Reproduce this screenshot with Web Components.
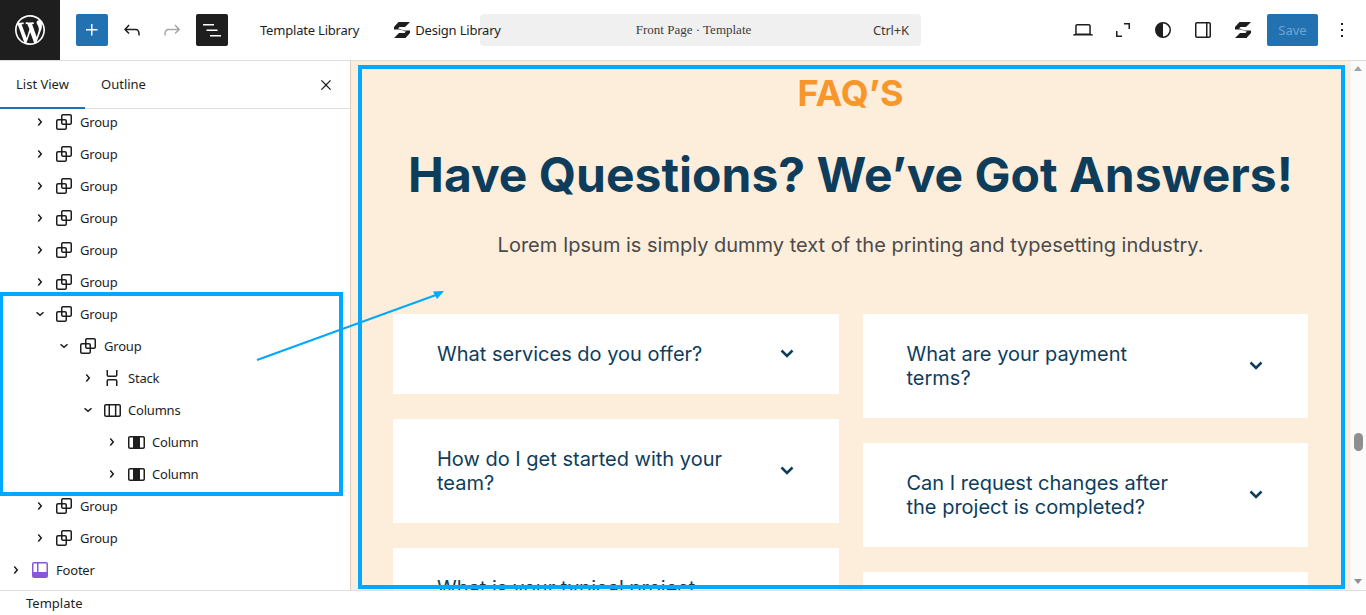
<!DOCTYPE html>
<html><head><meta charset="utf-8"><style>
html,body{margin:0;height:100%;overflow:hidden;background:#fff}
body{font-family:"Noto Sans",sans-serif;color:#1e1e1e}
</style></head><body>
<wp-editor></wp-editor>
<script>
const P={
wp:'M20 10c0-5.51-4.49-10-10-10C4.48 0 0 4.49 0 10c0 5.52 4.48 10 10 10 5.51 0 10-4.48 10-10zM7.78 15.37L4.37 6.22c.55-.02 1.17-.08 1.17-.08.5-.06.44-1.13-.06-1.11 0 0-1.45.11-2.37.11-.18 0-.37 0-.58-.01C4.12 2.69 6.87 1.11 10 1.11c2.33 0 4.45.87 6.05 2.34-.68-.11-1.65.39-1.65 1.58 0 .74.45 1.36.9 2.1.35.61.55 1.36.55 2.46 0 1.49-1.4 5-1.4 5l-3.03-8.37c.54-.02.82-.17.82-.17.5-.05.44-1.25-.06-1.22 0 0-1.44.12-2.38.12-.87 0-2.33-.12-2.33-.12-.5-.03-.56 1.2-.06 1.22l.92.08 1.26 3.41zM17.41 10c.24-.64.74-1.87.43-4.25.7 1.29 1.05 2.71 1.05 4.25 0 3.29-1.73 6.24-4.4 7.78.97-2.59 1.94-5.2 2.92-7.78zM6.1 18.09C3.12 16.65 1.11 13.53 1.11 10c0-1.3.23-2.48.72-3.59C3.25 10.3 4.67 14.2 6.1 18.09zm4.03-6.63l2.58 6.98c-.86.29-1.76.45-2.71.45-.79 0-1.57-.11-2.29-.33.81-2.38 1.62-4.74 2.42-7.1z',
plus:'M11 12.5V17.5H12.5V12.5H17.5V11H12.5V6H11V11H6V12.5H11Z',
undo:'M18.3 11.7c-.6-.6-1.4-.9-2.3-.9H6.7l2.9-3.3-1.1-1-4.5 5L8.5 16l1-1-2.7-2.7H16c.5 0 .9.2 1.3.5 1 1 1 3.4 1 4.5v.3h1.5v-.2c0-1.5 0-4.3-1.5-5.7z',
redo:'M15.6 6.5l-1.1 1 2.9 3.3H8c-.9 0-1.7.3-2.3.9-1.4 1.5-1.4 4.2-1.4 5.6v.2h1.5v-.3c0-1.1 0-3.5 1-4.5.3-.3.7-.5 1.3-.5h9.2L14.5 15l1.1 1.1 4.6-4.6-4.6-5z',
list:'M3 6h11v1.5H3V6Zm3.5 5.5h11V13h-11v-1.5ZM21 17H10v1.5h11V17Z',
close:'m13.06 12 4.97-4.97-1.06-1.06L12 10.94 7.03 5.97 5.97 7.03 10.94 12l-4.97 4.97 1.06 1.06L12 13.06l4.97 4.97 1.06-1.06L13.06 12Z',
right:'M10.86 8.04 14.28 12.03 10.86 16.02 9.72 15.04 12.3 12.03 9.72 9.02Z',
down:'M8.04 10.86 12.03 14.28 16.02 10.86 15.04 9.72 12.03 12.3 9.02 9.72Z',
group:'M18 4h-7c-1.1 0-2 .9-2 2v3H6c-1.1 0-2 .9-2 2v7c0 1.1.9 2 2 2h7c1.1 0 2-.9 2-2v-3h3c1.1 0 2-.9 2-2V6c0-1.1-.9-2-2-2zm-4.5 14c0 .3-.2.5-.5.5H6c-.3 0-.5-.2-.5-.5v-7c0-.3.2-.5.5-.5h3V13c0 1.1.9 2 2 2h2.5v3zm0-4.5H11c-.3 0-.5-.2-.5-.5v-2.5H13c.3 0 .5.2.5.5v2.5zm5-.5c0 .3-.2.5-.5.5h-3V11c0-1.1-.9-2-2-2h-2.5V6c0-.3.2-.5.5-.5h7c.3 0 .5.2.5.5v7z',
stack:'M17.5 4v5a2 2 0 0 1-2 2h-7a2 2 0 0 1-2-2V4H8v5a.5.5 0 0 0 .5.5h7A.5.5 0 0 0 16 9V4h1.5Zm0 16v-5a2 2 0 0 0-2-2h-7a2 2 0 0 0-2 2v5H8v-5a.5.5 0 0 1 .5-.5h7a.5.5 0 0 1 .5.5v5h1.5Z',
columns:'M19 6H6c-1.1 0-2 .9-2 2v9c0 1.1.9 2 2 2h13c1.1 0 2-.9 2-2V8c0-1.1-.9-2-2-2zm-4.1 1.5v10H10v-10h4.9zM5.5 17V8c0-.3.2-.5.5-.5h2.500v10H6c-.3 0-.5-.2-.5-.5zm14 0c0 .3-.2.5-.5.5h-2.600v-10H19c.3 0 .5.2.5.5v9z',
column:'M19 6H6c-1.1 0-2 .9-2 2v9c0 1.1.9 2 2 2h13c1.1 0 2-.9 2-2V8c0-1.1-.9-2-2-2zM6 17.5c-.3 0-.5-.2-.5-.5V8c0-.3.2-.5.5-.5h3v10H6zm13.5-.5c0 .3-.2.5-.5.5h-3v-10h3c.3 0 .5.2.5.5v9z',
footer:'M6 4h12a2 2 0 0 1 2 2v12a2 2 0 0 1-2 2H6a2 2 0 0 1-2-2V6a2 2 0 0 1 2-2ZM5.500 6V14H9V5.500H6a.5.5 0 0 0-.5.5ZM10.500 5.500V14H18.500V6a.5.5 0 0 0-.5-.5Z',
laptop:'M20.500 16h-.7V8c0-1.100-.9-2-2-2H6.200c-1.100 0-2 .9-2 2v8h-.7c-.8 0-1.500.7-1.500 1.500h20c0-.8-.7-1.500-1.500-1.500zM5.700 8c0-.3.2-.5.5-.5h11.600c.3 0 .5.2.5.5v7.600H5.700V8z',
full:'M13 5H19V11H17.5V6.500H13ZM5 13H6.500V17.500H11V19H5Z',
contrast:'M12 4a8 8 0 1 0 0 16 8 8 0 0 0 0-16ZM12 5.500a6.500 6.500 0 0 1 0 13Z',
side:'M18 4H6c-1.100 0-2 .9-2 2v12c0 1.100.9 2 2 2h12c1.100 0 2-.9 2-2V6c0-1.100-.9-2-2-2zm-3 14.500H6c-.3 0-.5-.2-.5-.5V6c0-.3.2-.5.5-.5h9v13zm3.500-.5c0 .3-.2.5-.5.5h-1.500v-13H18c.3 0 .5.2.5.5v12z',
kebab:'M13 19h-2v-2h2v2zm0-6h-2v-2h2v2zm0-6h-2V5h2v2z',
logo:'M8.500 4H20L15 9H9.500L8 10.500 13 11.500H4V9ZM15.500 20H4L9 15H14.500L16 13.500 11 12.500H20V15Z'
};
const svg=(n,s=24)=>`<svg width="${s}" height="${s}" viewBox="0 0 ${n==='wp'?20:24} ${n==='wp'?20:24}" fill="currentColor" aria-hidden="true"><path d="${P[n]}"/></svg>`;
const def=(name,html,init)=>customElements.define(name,class extends HTMLElement{constructor(){super();this.attachShadow({mode:'open'}).innerHTML=html;}connectedCallback(){init&&init(this)}});

def('wp-icon-btn',`<style>:host{display:flex;width:32px;height:32px;align-items:center;justify-content:center;border-radius:2px;flex:none;color:#1e1e1e}
:host([primary]){background:#2271b1;color:#fff}:host([dark]){background:#1e1e1e;color:#fff}:host([muted]){color:#a7a7a7}
</style><span id="i" style="display:flex"></span>`,h=>{h.shadowRoot.getElementById('i').innerHTML=svg(h.getAttribute('icon'))});

def('wp-topbar',`<style>
:host{display:flex;align-items:center;height:60px;border-bottom:1px solid #ddd;font-size:13px;background:#fff;flex:none;position:relative;z-index:3}
.logo{width:60px;height:60px;background:#1e1e1e;color:#fff;display:flex;align-items:center;justify-content:center;flex:none}
.l{display:flex;align-items:center;gap:8px;margin-left:16px}
.tl{margin-left:32px;white-space:nowrap;letter-spacing:-.2px}
.dl{display:flex;align-items:center;margin-left:31px;white-space:nowrap;position:relative;z-index:1;letter-spacing:-.2px}
.dl svg{margin-right:1px}
.cc{margin-left:-21px;width:441px;height:32px;box-sizing:border-box;padding:0 12px 0 0;background:#f0f0f0;border-radius:4px;display:flex;align-items:center;color:#1e1e1e;flex:none;position:relative}
.cc .t{font-family:"Liberation Serif",serif;font-size:13px;color:#3c3c3c;margin-left:156px;white-space:nowrap}
.cc .k{margin-left:auto;color:#3c3c3c;letter-spacing:-.2px}
.r{margin-left:auto;display:flex;align-items:center;gap:8px;padding-right:8px}
.save{width:51px;height:32px;background:#2271b1;color:#6fa5d0;border-radius:2px;display:flex;align-items:center;justify-content:center}
</style>
<div class="logo">${svg('wp',30)}</div>
<div class="l"><wp-icon-btn icon="plus" primary></wp-icon-btn><wp-icon-btn icon="undo"></wp-icon-btn><wp-icon-btn icon="redo" muted></wp-icon-btn><wp-icon-btn icon="list" dark></wp-icon-btn></div>
<span class="tl">Template Library</span>
<span class="dl">${svg('logo',24)}Design Library</span>
<div class="cc"><span class="t">Front Page · Template</span><span class="k">Ctrl+K</span></div>
<div class="r"><wp-icon-btn icon="laptop"></wp-icon-btn><wp-icon-btn icon="full"></wp-icon-btn><wp-icon-btn icon="contrast"></wp-icon-btn><wp-icon-btn icon="side"></wp-icon-btn><wp-icon-btn icon="logo"></wp-icon-btn><div class="save">Save</div><wp-icon-btn icon="kebab"></wp-icon-btn></div>`);

def('tree-row',`<style>
:host{display:flex;align-items:center;height:32px;padding-left:calc(4px + 24px * var(--lvl,0));font-size:13px;color:#1e1e1e;white-space:nowrap;letter-spacing:-.2px}
.c,.i{display:flex;width:24px;height:24px;flex:none}
.n{margin-left:4px}
:host([kind=footer]) .i{color:#8858db}
:host([kind=column]) .i{position:relative}
.fill{position:absolute;left:9px;top:7px;width:7px;height:11px;background:#1e1e1e;display:none}
:host([kind=column]) .fill{display:block}
</style><span class="c" id="c"></span><span class="i" id="i"><span class="fill"></span></span><span class="n"><slot></slot></span>`,h=>{
 const r=h.shadowRoot,l=h.getAttribute('lvl')||0;h.style.setProperty('--lvl',l);
 r.getElementById('c').innerHTML=svg(h.hasAttribute('open')?'down':'right');
 r.getElementById('i').insertAdjacentHTML('afterbegin',svg(h.getAttribute('kind')));
});

def('wp-sidebar',`<style>
:host{display:flex;flex-direction:column;width:350px;flex:none;background:#fff;overflow:hidden}
.tabs{display:flex;align-items:center;height:47px;border-bottom:1px solid #ddd;font-size:13px;position:relative;z-index:1;background:#fff;flex:none}
.tab{height:47px;display:flex;align-items:center;padding:0 16px 2px;box-sizing:border-box;position:relative}
.tab.on::after{content:"";position:absolute;left:0;right:0;bottom:-1px;height:2px;background:#2271b1}
.x{margin-left:auto;margin-right:14px;display:flex}
.tree{margin-top:-3px;flex:1;min-height:0}
</style>
<div class="tabs"><div class="tab on" style="width:85px">List View</div><div class="tab">Outline</div><span class="x">${svg('close',20)}</span></div>
<div class="tree"><slot></slot></div>`);

def('faq-card',`<style>
:host{display:flex;align-items:center;background:#fff;padding:28px 40px 28px 44px;font:400 20px/24px Inter,sans-serif;color:#0e3d5c;min-width:0}
.t{width:288px;flex:none}
.c{margin-left:auto;display:flex;width:24px;height:24px;flex:none}
svg{fill:none;stroke:#0e3d5c;stroke-width:2.500}
</style><span class="t"><slot></slot></span><span class="c"><svg width="24" height="24" viewBox="0 0 24 24"><path d="M6.500 8.500 12 14l5.500-5.500"/></svg></span>`);

def('faq-section',`<style>
:host{display:block;height:100%;background:#fdeedc;padding:0 42px;box-sizing:border-box;overflow:hidden;font-family:Inter,sans-serif;text-align:center}
.e{font-weight:700;font-size:36px;line-height:44px;color:#f7962b;margin-top:10px}
h1{margin:31px -20px 0;font-weight:700;font-size:48px;line-height:58px;color:#0e3d5c;white-space:nowrap}
p{margin:27px 0 0;font-size:20px;line-height:28px;color:#4a4a4a}
.g{margin-top:55px;display:grid;grid-template-columns:1fr 1fr;column-gap:24px;text-align:left;align-items:start}
.col{display:flex;flex-direction:column;gap:25px;min-width:0}
</style>
<div class="e">FAQ’S</div>
<h1>Have Questions? We’ve Got Answers!</h1>
<p>Lorem Ipsum is simply dummy text of the printing and typesetting industry.</p>
<div class="g"><div class="col"><slot name="l"></slot></div><div class="col"><slot name="r"></slot></div></div>`);

def('wp-scrollbar',`<style>
:host{display:block;width:16px;flex:none;background:#fbfbfb;position:relative;border-left:1px solid #f3f3f3;box-sizing:border-box}
.u,.d{position:absolute;left:3px;width:0;height:0;border-left:4.500px solid transparent;border-right:4.500px solid transparent}
.u{top:5px;border-bottom:5px solid #a3a3a3}.d{bottom:6px;border-top:5px solid #8f8f8f}
.th{position:absolute;left:3px;top:372px;width:9px;height:18px;border-radius:5px;background:#8f8f8f}
</style><i class="u"></i><i class="th"></i><i class="d"></i>`);

def('wp-editor',`<style>
:host{display:flex;flex-direction:column;height:615px;position:relative;overflow:hidden}
.m{display:flex;height:529px;flex:none;border-bottom:1px solid #e0e0e0}
.canvas{flex:1;min-width:0;overflow:hidden;border-left:1px solid #dccfc2}
.foot{height:25px;font-size:13px;padding-left:26px;display:flex;align-items:center;background:#fff}
.ann{position:absolute;left:358px;top:65px;width:987px;height:524px;box-sizing:border-box;border:4px solid #00a8ff}
.ann2{position:absolute;left:-1px;top:292px;width:344px;height:204px;box-sizing:border-box;border:4px solid #00a8ff}
.arr{position:absolute;left:0;top:0;pointer-events:none}
</style>
<wp-topbar></wp-topbar>
<div class="m">
<wp-sidebar>
${Array(6).fill('<tree-row kind="group" lvl="1">Group</tree-row>').join('')}
<tree-row kind="group" lvl="1" open>Group</tree-row>
<tree-row kind="group" lvl="2" open>Group</tree-row>
<tree-row kind="stack" lvl="3">Stack</tree-row>
<tree-row kind="columns" lvl="3" open>Columns</tree-row>
<tree-row kind="column" lvl="4">Column</tree-row>
<tree-row kind="column" lvl="4">Column</tree-row>
<tree-row kind="group" lvl="1">Group</tree-row>
<tree-row kind="group" lvl="1">Group</tree-row>
<tree-row kind="footer" lvl="0">Footer</tree-row>
</wp-sidebar>
<div class="canvas"><faq-section>
<faq-card slot="l">What services do you offer?</faq-card>
<faq-card slot="l">How do I get started with your team?</faq-card>
<faq-card slot="l">What is your typical project timeline?</faq-card>
<faq-card slot="r">What are your payment terms?</faq-card>
<faq-card slot="r">Can I request changes after the project is completed?</faq-card>
<faq-card slot="r"></faq-card>
</faq-section></div>
<wp-scrollbar></wp-scrollbar>
</div>
<div class="foot">Template</div>
<div class="ann"></div><div class="ann2"></div>
<svg class="arr" width="1366" height="615"><line x1="257" y1="360" x2="436" y2="295" stroke="#00a8ff" stroke-width="2"/><path d="M444 291 433 291.500 437 299Z" fill="#00a8ff"/></svg>`);
</script>
</body></html>
